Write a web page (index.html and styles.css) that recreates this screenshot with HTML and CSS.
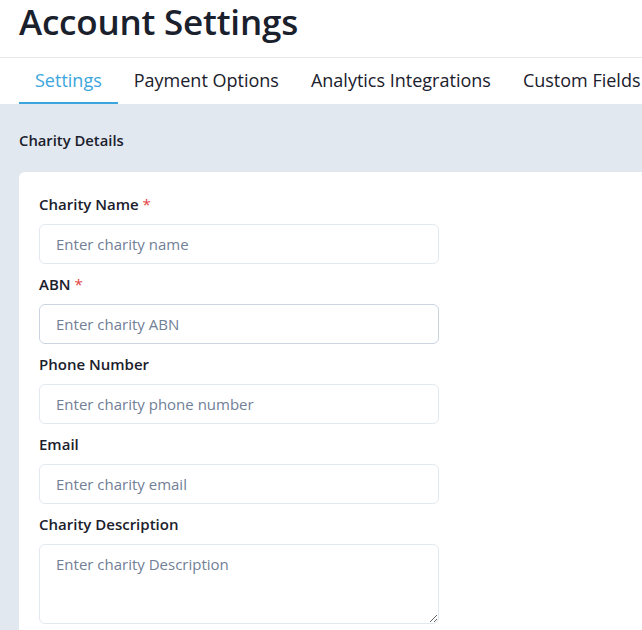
FILE: index.html
```html
<!DOCTYPE html>
<html lang="en">
<head>
<meta charset="utf-8">
<title>Account Settings</title>
<link rel="stylesheet" href="styles.css">
</head>
<body>
<header class="page-header">
  <h1 class="page-title">Account Settings</h1>
</header>
<nav class="tabs">
  <a class="tab tab-active">Settings</a>
  <a class="tab">Payment Options</a>
  <a class="tab">Analytics Integrations</a>
  <a class="tab">Custom Fields</a>
</nav>
<main class="content">
  <h2 class="section-title">Charity Details</h2>
  <section class="card">
    <div class="field">
      <label class="label">Charity Name <span class="req">*</span></label>
      <input class="input" type="text" placeholder="Enter charity name">
    </div>
    <div class="field">
      <label class="label">ABN <span class="req">*</span></label>
      <input class="input input-hover" type="text" placeholder="Enter charity ABN">
    </div>
    <div class="field">
      <label class="label">Phone Number</label>
      <input class="input" type="text" placeholder="Enter charity phone number">
    </div>
    <div class="field">
      <label class="label">Email</label>
      <input class="input" type="text" placeholder="Enter charity email">
    </div>
    <div class="field">
      <label class="label">Charity Description</label>
      <textarea class="input textarea" placeholder="Enter charity Description"></textarea>
    </div>
  </section>
</main>
</body>
</html>
```
FILE: styles.css
```css
* { box-sizing: border-box; }
html, body { margin: 0; padding: 0; }
body {
  font-family: "Open Sans", "Noto Sans", sans-serif;
  color: #1a202c;
  background: #fff;
  overflow: hidden;
  width: 642px;
}
.page-header {
  padding: 1px 19px 0;
  height: 58px;
  border-bottom: 1px solid #e5e7eb;
}
.page-title {
  margin: 0;
  font-size: 35px;
  font-weight: 600;
  line-height: 42px;
  color: #1a202c;
  letter-spacing: -0.2px;
}
.tabs {
  display: flex;
  padding: 0 19px;
  height: 46px;
  white-space: nowrap;
}
.tab {
  padding: 0 16px;
  font-size: 18px;
  line-height: 44px;
  color: #1a202c;
  border-bottom: 2px solid transparent;
}
.tab-active {
  color: #3ba6dd;
  border-bottom-color: #3ba6dd;
}
.content {
  background: #e2e8f0;
  padding: 24px 0 0 19px;
  min-height: 600px;
}
.section-title {
  margin: 0 0 20px;
  font-size: 14.8px;
  font-weight: 600;
  line-height: 24px;
}
.card {
  background: #fff;
  border-radius: 6px 0 0 0;
  padding: 20px;
}
.field {
  display: flex;
  flex-direction: column;
  width: 400px;
  margin-bottom: 8px;
}
.label {
  font-size: 15px;
  font-weight: 600;
  line-height: 24px;
  margin-bottom: 8px;
  color: #1a202c;
}
.req { color: #e53e3e; font-weight: 400; }
.input {
  width: 400px;
  height: 40px;
  border: 1px solid #e2e8f0;
  border-radius: 6px;
  padding: 0 16px;
  font-family: inherit;
  font-size: 15px;
  color: #1a202c;
  background: #fff;
  outline: none;
}
.input-hover { border-color: #cbd5e0; }
.input::placeholder { color: #718096; opacity: 1; }
.textarea {
  height: 80px;
  padding: 7px 16px;
  line-height: 24px;
  resize: vertical;
}
```
